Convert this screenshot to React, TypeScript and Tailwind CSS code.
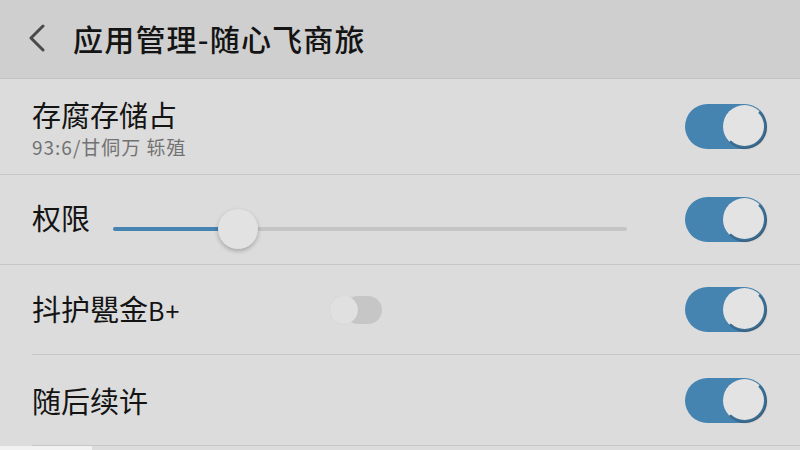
import React from "react";

const font = {
  fontFamily: '"Noto Sans CJK SC", "Noto Sans", sans-serif',
};

function Toggle() {
  return (
    <div className="relative w-[82px] h-[45px] rounded-full bg-[#4583b0] shrink-0">
      <div className="absolute right-[1px] top-[1px] w-[43px] h-[43px] rounded-full bg-[#e3e3e3] border-[2px] border-[#3d6f94] border-t-[#e3e3e3] border-l-[#e3e3e3] shadow-[1px_1px_1px_rgba(0,0,0,0.35)]" />
    </div>
  );
}

function SmallOffToggle() {
  return (
    <div className="relative w-[52px] h-[28px] ml-[147px]">
      <div className="absolute left-[14px] top-0 w-[38px] h-[28px] rounded-full bg-[#c6c6c6]" />
      <div className="absolute left-0 top-0 w-[28px] h-[28px] rounded-full bg-[#e0e0e0] shadow-[0_0_2px_rgba(0,0,0,0.06)]" />
    </div>
  );
}

export default function App() {
  return (
    <div className="w-[800px] h-[450px] overflow-hidden bg-[#dcdcdc] text-[#141414]" style={font}>
      <header className="h-[79px] bg-[#cfcfcf] border-b border-[#c2c2c2] flex items-center px-[26px]">
        <svg width="20" height="28" viewBox="0 0 20 28" className="mb-[2px]">
          <path d="M17 2 L5 14 L17 26" fill="none" stroke="#4a4a4a" strokeWidth="3" strokeLinecap="round" strokeLinejoin="round" />
        </svg>
        <h1 className="ml-[27px] text-[30px] leading-none font-medium tracking-[1.2px] mb-[2px]">
          应用管理-随心飞商旅
        </h1>
      </header>

      <div className="h-[96px] flex items-center justify-between pl-[32px] pr-[33px] border-b border-[#c6c6c6]">
        <div className="flex flex-col pt-[1px]">
          <span className="text-[29px] leading-[40px]">存腐存储占</span>
          <span className="text-[19px] leading-[26px] text-[#727272] tracking-[1px]">93:6/甘侗万 轹殖</span>
        </div>
        <Toggle />
      </div>

      <div className="h-[90px] flex items-center pl-[32px] pr-[33px] border-b border-[#c6c6c6]">
        <span className="text-[29px] leading-none w-[81px] shrink-0 mb-[4px]">权限</span>
        <div className="relative w-[514px] h-[4px] mt-[18px] rounded-full bg-[#c4c4c4]">
          <div className="absolute left-0 top-0 h-[4px] w-[110px] rounded-full bg-[#4583b0]" />
          <div className="absolute left-[105px] top-[-18px] w-[40px] h-[40px] rounded-full bg-[#e2e2e2] shadow-[0_2px_4px_rgba(0,0,0,0.25)]" />
        </div>
        <div className="flex-1" />
        <Toggle />
      </div>

      <div className="h-[89px] flex items-center pl-[32px] pr-[33px]">
        <span className="text-[29px] leading-none w-[151px] shrink-0 mb-[2px]">
          抖护甖金<span className="text-[25px] tracking-[1px]">B+</span>
        </span>
        <SmallOffToggle />
        <div className="flex-1" />
        <Toggle />
      </div>

      <div className="ml-[32px] border-b border-[#c6c6c6]" />

      <div className="h-[90px] flex items-center pl-[32px] pr-[33px]">
        <span className="text-[29px] leading-none">随后续许</span>
        <div className="flex-1" />
        <Toggle />
      </div>

      <div className="ml-[32px] border-b border-[#c6c6c6]" />
      <div className="h-[4px] w-[92px] bg-[#f2f2f2]" />
    </div>
  );
}
